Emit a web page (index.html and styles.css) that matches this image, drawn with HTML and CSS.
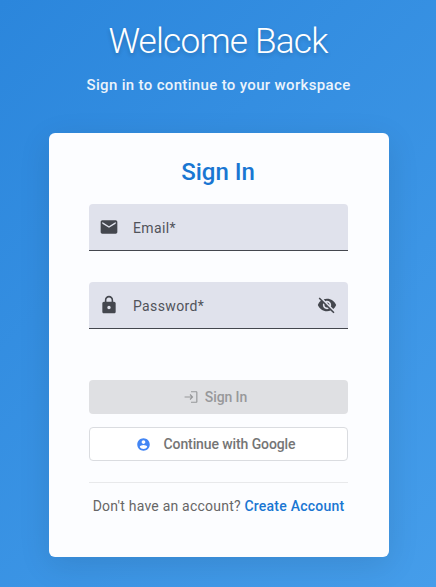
FILE: index.html
```html
<!DOCTYPE html>
<html lang="en">
<head>
<meta charset="utf-8">
<title>Sign In</title>
<link rel="stylesheet" href="styles.css">
</head>
<body>
<main class="page">
  <header class="hero">
    <h1 class="hero-title">Welcome Back</h1>
    <p class="hero-subtitle">Sign in to continue to your workspace</p>
  </header>
  <section class="card">
    <h2 class="card-title">Sign In</h2>
    <form class="form">
      <div class="field">
        <svg class="field-icon" viewBox="0 0 24 24"><path d="M20 4H4c-1.1 0-1.99.9-1.99 2L2 18c0 1.1.9 2 2 2h16c1.1 0 2-.9 2-2V6c0-1.1-.9-2-2-2zm0 4l-8 5-8-5V6l8 5 8-5v2z"/></svg>
        <span class="field-label">Email*</span>
      </div>
      <div class="field">
        <svg class="field-icon" viewBox="0 0 24 24"><path d="M18 8h-1V6c0-2.76-2.24-5-5-5S7 3.24 7 6v2H6c-1.1 0-2 .9-2 2v10c0 1.1.9 2 2 2h12c1.1 0 2-.9 2-2V10c0-1.1-.9-2-2-2zm-6 9c-1.1 0-2-.9-2-2s.9-2 2-2 2 .9 2 2-.9 2-2 2zm3.1-9H8.9V6c0-1.71 1.39-3.1 3.1-3.1s3.1 1.39 3.1 3.1v2z"/></svg>
        <span class="field-label">Password*</span>
        <svg class="field-icon" viewBox="0 0 24 24"><path d="M12 7c2.76 0 5 2.24 5 5 0 .65-.13 1.26-.36 1.83l2.92 2.92c1.51-1.26 2.7-2.89 3.43-4.75-1.73-4.39-6-7.5-11-7.5-1.4 0-2.74.25-3.98.7l2.16 2.16C10.74 7.13 11.35 7 12 7zM2 4.27l2.28 2.28.46.46C3.08 8.3 1.78 10.02 1 12c1.73 4.39 6 7.5 11 7.5 1.55 0 3.03-.3 4.38-.84l.42.42L19.73 22 21 20.73 3.27 3 2 4.27zM7.53 9.8l1.55 1.55c-.05.21-.08.43-.08.65 0 1.66 1.34 3 3 3 .22 0 .44-.03.65-.08l1.55 1.55c-.67.33-1.41.53-2.2.53-2.76 0-5-2.24-5-5 0-.79.2-1.53.53-2.2zm4.31-.78l3.15 3.15.02-.16c0-1.66-1.34-3-3-3l-.17.01z"/></svg>
      </div>
      <button class="button button-submit" type="button" disabled>
        <svg class="submit-icon" viewBox="0 0 24 24"><path d="M11 7L9.6 8.4l2.6 2.6H1v2h11.2l-2.6 2.6L11 17l5-5-5-5zm10 13h-9v2h9c1.1 0 2-.9 2-2V4c0-1.1-.9-2-2-2h-9v2h9v16z"/></svg>
        <span>Sign In</span>
      </button>
      <button class="button button-google" type="button">
        <svg class="google-icon" viewBox="0 0 24 24"><path d="M12 2C6.48 2 2 6.48 2 12s4.48 10 10 10 10-4.48 10-10S17.52 2 12 2zm0 3c1.66 0 3 1.34 3 3s-1.34 3-3 3-3-1.34-3-3 1.34-3 3-3zm0 14.2c-2.5 0-4.71-1.28-6-3.22.03-1.99 4-3.08 6-3.08 1.99 0 5.97 1.09 6 3.08-1.29 1.94-3.5 3.22-6 3.22z"/></svg>
        <span>Continue with Google</span>
      </button>
    </form>
    <p class="signup">Don't have an account? <a class="signup-link" href="#">Create Account</a></p>
  </section>
</main>
</body>
</html>
```
FILE: styles.css
```css
* {
  box-sizing: border-box;
}

body {
  margin: 0;
  font-family: Roboto, "Liberation Sans", sans-serif;
}

.page {
  height: 587px;
  padding: 20px 47px 30px 49px;
  overflow: hidden;
  background: linear-gradient(135deg, #2b86dc, #459dea);
}

.hero {
  height: 113px;
  text-align: center;
  color: #fff;
}

.hero-title {
  margin: 0;
  padding-right: 2px;
  font-size: 35.2px;
  font-weight: 300;
  line-height: 42px;
  letter-spacing: -0.8px;
  text-shadow: 0 2px 4px rgba(0, 0, 0, 0.2);
}

.hero-subtitle {
  margin: 13px 0 0;
  padding-right: 1px;
  font-size: 15px;
  font-weight: 500;
  line-height: 20px;
  letter-spacing: 0.34px;
  opacity: 0.9;
  white-space: nowrap;
}

.card {
  height: 424px;
  padding: 24px 41px 0 40px;
  border-radius: 6px;
  background: #fcfdff;
  box-shadow: 0 8px 32px rgba(0, 0, 0, 0.1);
}

.card-title {
  margin: 0 0 17px;
  padding-right: 1px;
  font-size: 24px;
  font-weight: 500;
  line-height: 30px;
  text-align: center;
  color: #1976d2;
}

.form {
  display: flex;
  flex-direction: column;
}

.field {
  display: flex;
  align-items: center;
  height: 47px;
  margin-bottom: 31px;
  padding: 0 11px 0 10px;
  border-bottom: 1px solid #44474e;
  border-radius: 4px 4px 0 0;
  background: #e0e2ec;
}

.field-icon {
  width: 20px;
  height: 20px;
  fill: #44474e;
}

.field-label {
  flex: 1;
  margin-left: 14px;
  padding-top: 2px;
  font-size: 14px;
  letter-spacing: 0.36px;
  color: #50535a;
}

.button {
  display: flex;
  align-items: center;
  justify-content: center;
  height: 34px;
  padding: 0;
  border: 0;
  border-radius: 4px;
  font: 500 14px/20px Roboto, "Liberation Sans", sans-serif;
  letter-spacing: -0.1px;
}

.button-submit {
  gap: 7px;
  margin: 20px 0 13px;
  padding-right: 6px;
  background: #dfe0e3;
  color: #97989a;
}

.button-google {
  gap: 13px;
  padding-right: 6px;
  border: 1px solid #dadce0;
  background: #fff;
  color: #757575;
}

.submit-icon {
  width: 14px;
  height: 14px;
  fill: currentColor;
}

.google-icon {
  width: 15px;
  height: 15px;
  fill: #4285f4;
}

.signup {
  margin: 21px 0 0;
  padding-top: 13px;
  border-top: 1px solid #e8e9eb;
  font-size: 14px;
  line-height: 20px;
  letter-spacing: 0.22px;
  text-align: center;
  white-space: nowrap;
  color: #666;
}

.signup-link {
  font-weight: 500;
  color: #1976d2;
  text-decoration: none;
}
```
